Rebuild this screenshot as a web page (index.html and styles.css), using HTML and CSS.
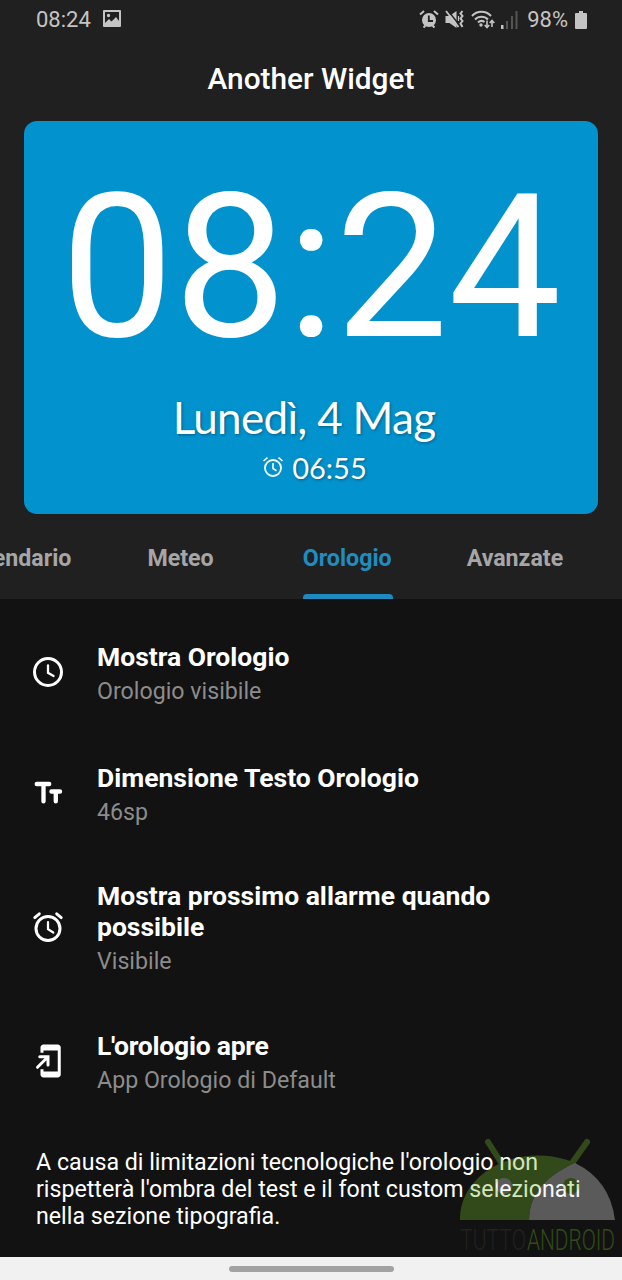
FILE: index.html
```html
<!DOCTYPE html>
<html lang="it">
<head>
    <meta charset="UTF-8">
    <title>Another Widget</title>
    <link rel="stylesheet" href="styles.css">
</head>
<body>
    <div class="header">
        <div class="status">
            <span class="status-time">08:24</span>
            <svg class="icon-image" width="18" height="17" viewBox="0 0 18 17">
                <path fill="#c4c4c4" fill-rule="evenodd" d="M1 0h16q1 0 1 1v15q0 1-1 1H1q-1 0-1-1V1q0-1 1-1zM2 2v11l4-4 2.500 2.500L13 7l3 4V2zM5.500 3.800a1.700 1.700 0 1 1 0 3.400a1.700 1.700 0 1 1 0-3.400z"/>
            </svg>
            <div class="status-right">
                <svg width="20" height="19" viewBox="0 0 20 19">
                    <circle cx="10" cy="10" r="7" fill="#c4c4c4"/>
                    <path d="M4.500 17.500l2-2M15.500 17.500l-2-2M1 4.500L5 1M19 4.500L15 1" stroke="#c4c4c4" stroke-width="2"/>
                    <path d="M9.800 5.500V11H14" fill="none" stroke="#202020" stroke-width="1.800"/>
                </svg>
                <svg width="20" height="19" viewBox="0 0 20 19">
                    <path d="M0.500 6h4L11.500 1v17l-7-5h-4z" fill="#c4c4c4"/>
                    <path d="M2.500 0l11 14" stroke="#202020" stroke-width="1.500"/>
                    <path d="M1 1l12.500 16" stroke="#c4c4c4" stroke-width="1.800"/>
                    <path d="M17.500 1l-2 2.500 2 2.500-2 2.500 2 2.500-2 2.500 2 3.500" fill="none" stroke="#c4c4c4" stroke-width="2"/>
                    <path d="M13.500 6v5" stroke="#c4c4c4" stroke-width="1.300"/>
                </svg>
                <svg width="24" height="19" viewBox="0 0 24 19">
                    <path d="M1 6a13 13 0 0 1 19 0M4 9.500a9 9 0 0 1 13 0M7 12.500a5 5 0 0 1 6.500-.5" fill="none" stroke="#c4c4c4" stroke-width="2"/>
                    <circle cx="10" cy="15" r="1.700" fill="#c4c4c4"/>
                    <path d="M16 10.500v7M13.700 15l2.300 2.500 2.300-2.500M21 17v-6.500M18.700 13l2.300-2.500 2.300 2.500" fill="none" stroke="#c4c4c4" stroke-width="1.600"/>
                </svg>
                <svg width="17" height="18" viewBox="0 0 17 18">
                    <path d="M0 14h2.500v4H0z" fill="#c4c4c4"/>
                    <path d="M5 10h2v8H5zM10 5h2v13h-2zM14.500 0h2v18h-2z" fill="#555"/>
                </svg>
                <span class="battery-text">98%</span>
                <svg width="12" height="18" viewBox="0 0 12 18">
                    <path d="M4 0h4v2h3q1 0 1 1v14q0 1-1 1H1q-1 0-1-1V3q0-1 1-1h3z" fill="#c4c4c4"/>
                </svg>
            </div>
        </div>
        <h1 class="title">Another Widget</h1>
        <div class="widget">
            <div class="clock">08:24</div>
            <div class="date">Lunedì, 4 Mag</div>
            <div class="alarm">
                <svg width="20" height="20" viewBox="2 2 20 20">
                    <circle cx="12" cy="13" r="8" fill="none" stroke="#fff" stroke-width="1.800"/>
                    <path d="M12 8v5.500l3.500 2.200M2.500 6l4-3.300M21.500 6l-4-3.300" fill="none" stroke="#fff" stroke-width="1.600"/>
                </svg>
                <span>06:55</span>
            </div>
        </div>
        <div class="tabs">
            <div class="tab">Calendario</div>
            <div class="tab">Meteo</div>
            <div class="tab active">Orologio</div>
            <div class="tab">Avanzate</div>
        </div>
    </div>

    <div class="list">
        <div class="item">
            <svg class="item-icon" viewBox="0 0 24 24">
                <circle cx="12" cy="12" r="9" fill="none" stroke="#fff" stroke-width="2"/>
                <path d="M12 7.500V12.500L15.700 14.700" fill="none" stroke="#fff" stroke-width="1.500" stroke-linecap="round"/>
            </svg>
            <div class="item-text">
                <div class="item-title">Mostra Orologio</div>
                <div class="item-sub">Orologio visibile</div>
            </div>
        </div>
        <div class="item">
            <svg class="item-icon" viewBox="0 0 24 24">
                <path d="M4.500 6H12.800M9 6v11.500M14.300 11H20M17.200 11v6.500" fill="none" stroke="#fff" stroke-width="2.900" stroke-linecap="round"/>
            </svg>
            <div class="item-text">
                <div class="item-title">Dimensione Testo Orologio</div>
                <div class="item-sub">46sp</div>
            </div>
        </div>
        <div class="item item-tall">
            <svg class="item-icon" viewBox="0 0 24 24">
                <circle cx="12" cy="13" r="8" fill="none" stroke="#fff" stroke-width="2"/>
                <path d="M12 8.700v4.800l3.500 2.200" fill="none" stroke="#fff" stroke-width="1.500" stroke-linecap="round"/>
                <path d="M3.200 5.700L6.200 3.200M20.800 5.700l-3-2.500" stroke="#fff" stroke-width="2" stroke-linecap="round"/>
            </svg>
            <div class="item-text">
                <div class="item-title">Mostra prossimo allarme quando possibile</div>
                <div class="item-sub">Visibile</div>
            </div>
        </div>
        <div class="item">
            <svg class="item-icon" viewBox="0 0 24 24">
                <path fill="#fff" d="M18.500 1H9c-1.100 0-2 .9-2 2v3.500h2V5h9.500v14H9v-1.500H7V21c0 1.100.9 2 2 2h9.500c1.100 0 2-.9 2-2V3c0-1.100-.9-2-2-2z"/>
                <path d="M6.500 9.200h5.500v5.500M11.500 9.700L5 16.200" fill="none" stroke="#fff" stroke-width="2" stroke-linecap="round"/>
            </svg>
            <div class="item-text">
                <div class="item-title title-open">L'orologio apre</div>
                <div class="item-sub">App Orologio di Default</div>
            </div>
        </div>
        <p class="note">A causa di limitazioni tecnologiche l'orologio non<br>rispetterà l'ombra del test e il font custom selezionati<br>nella sezione tipografia.</p>
        <svg class="watermark" width="162" height="119" viewBox="0 0 162 119">
            <path d="M28 4l14 22M127 4l-17 24" stroke="#73b92d" stroke-width="6" stroke-linecap="round"/>
            <path d="M0 82A78 63 0 0 1 115 25Q69 45 69 82z" fill="#73b92d"/>
            <path d="M69 82Q69 45 115 25Q150 42 155 82z" fill="#ececec"/>
            <circle cx="44" cy="48" r="8" fill="#ececec"/>
            <circle cx="111" cy="48" r="8" fill="#73b92d"/>
            <text class="mark" x="0" y="112" fill="#404040" textLength="66" lengthAdjust="spacingAndGlyphs">TUTTO</text>
            <text class="mark" x="67" y="112" fill="#73b92d" textLength="88" lengthAdjust="spacingAndGlyphs">ANDROID</text>
        </svg>
    </div>

    <div class="navbar"><div class="handle"></div></div>
</body>
</html>
```
FILE: styles.css
```css
*{
    box-sizing: border-box;
}
body{
    margin: 0;
    width: 622px;
    height: 1280px;
    overflow: hidden;
    display: flex;
    flex-direction: column;
    background-color: #121212;
    color: #fff;
    font-family: Roboto, "Liberation Sans", sans-serif;
}
svg{
    display: block;
    flex: none;
}

/* header */
.header{
    height: 599px;
    flex: none;
    background-color: #202020;
}
.status{
    height: 39px;
    padding: 0 35px 0 36px;
    display: flex;
    align-items: center;
    color: #c4c4c4;
    font-size: 22px;
}
.icon-image{
    margin-left: 12px;
    margin-bottom: 2px;
}
.status-right{
    margin-left: auto;
    display: flex;
    align-items: center;
    gap: 6px;
}
.battery-text{
    margin-left: 3px;
    margin-right: 1px;
}
.title{
    margin: 0;
    height: 82px;
    line-height: 80px;
    text-align: center;
    font-size: 29.800px;
    font-weight: 500;
}

/* widget preview */
.widget{
    height: 393px;
    margin: 0 24px;
    border-radius: 13px;
    background-color: #0292cd;
    text-align: center;
}
.clock{
    height: 274px;
    padding-top: 28px;
    line-height: 237px;
    font-size: 201px;
}
.date{
    height: 48px;
    line-height: 44px;
    padding-right: 14px;
    font-family: Lato, "Open Sans", sans-serif;
    font-size: 44px;
    letter-spacing: -.7px;
    text-shadow: 1px 1px 3px rgba(0, 0, 0, .35);
}
.alarm{
    height: 50px;
    display: flex;
    justify-content: center;
    align-items: center;
    gap: 9px;
    font-family: Lato, "Open Sans", sans-serif;
    font-size: 29px;
    line-height: 33px;
    padding: 0 0 2px 8px;
    text-shadow: 1px 1px 3px rgba(0, 0, 0, .35);
}

/* tabs */
.tabs{
    height: 85px;
    display: flex;
    margin-left: -41px;
}
.tab{
    height: 85px;
    line-height: 88px;
    margin-right: 76px;
    color: #a6a6a6;
    font-size: 23.200px;
    font-weight: 700;
    white-space: nowrap;
}
.active{
    position: relative;
    margin-left: 13px;
    margin-right: 75px;
    color: #1f8dc2;
}
.active::after{
    content: "";
    position: absolute;
    left: 0;
    right: -1px;
    bottom: 0;
    height: 5px;
    border-radius: 4px 4px 0 0;
    background-color: #1f8abd;
}

/* settings */
.list{
    position: relative;
    height: 658px;
    flex: none;
    padding-top: 13px;
}
.item{
    height: 121px;
    display: flex;
    align-items: center;
    padding-left: 30px;
}
.item-tall{
    height: 147px;
}
.item-icon{
    width: 36px;
    height: 36px;
    margin-right: 31px;
    margin-bottom: 2px;
}
.item-text{
    width: 430px;
}
.item-title{
    font-size: 26.500px;
    line-height: 31px;
    font-weight: 700;
}
.title-open{
    letter-spacing: -.250px;
}
.item-sub{
    margin-top: 5px;
    font-size: 23.200px;
    line-height: 28px;
    color: #8c8c8c;
}
.note{
    margin: 27px 0 0 36px;
    font-size: 23.200px;
    line-height: 27px;
    white-space: nowrap;
}
.watermark{
    position: absolute;
    left: 460px;
    top: 539px;
    opacity: .33;
}
.mark{
    font-family: Roboto, sans-serif;
    font-size: 29px;
    font-weight: 300;
}

.navbar{
    height: 23px;
    background-color: #f1f1f1;
    display: flex;
    justify-content: center;
    align-items: center;
}
.handle{
    width: 165px;
    height: 6px;
    border-radius: 3px;
    background-color: #a2a2a2;
}
```
